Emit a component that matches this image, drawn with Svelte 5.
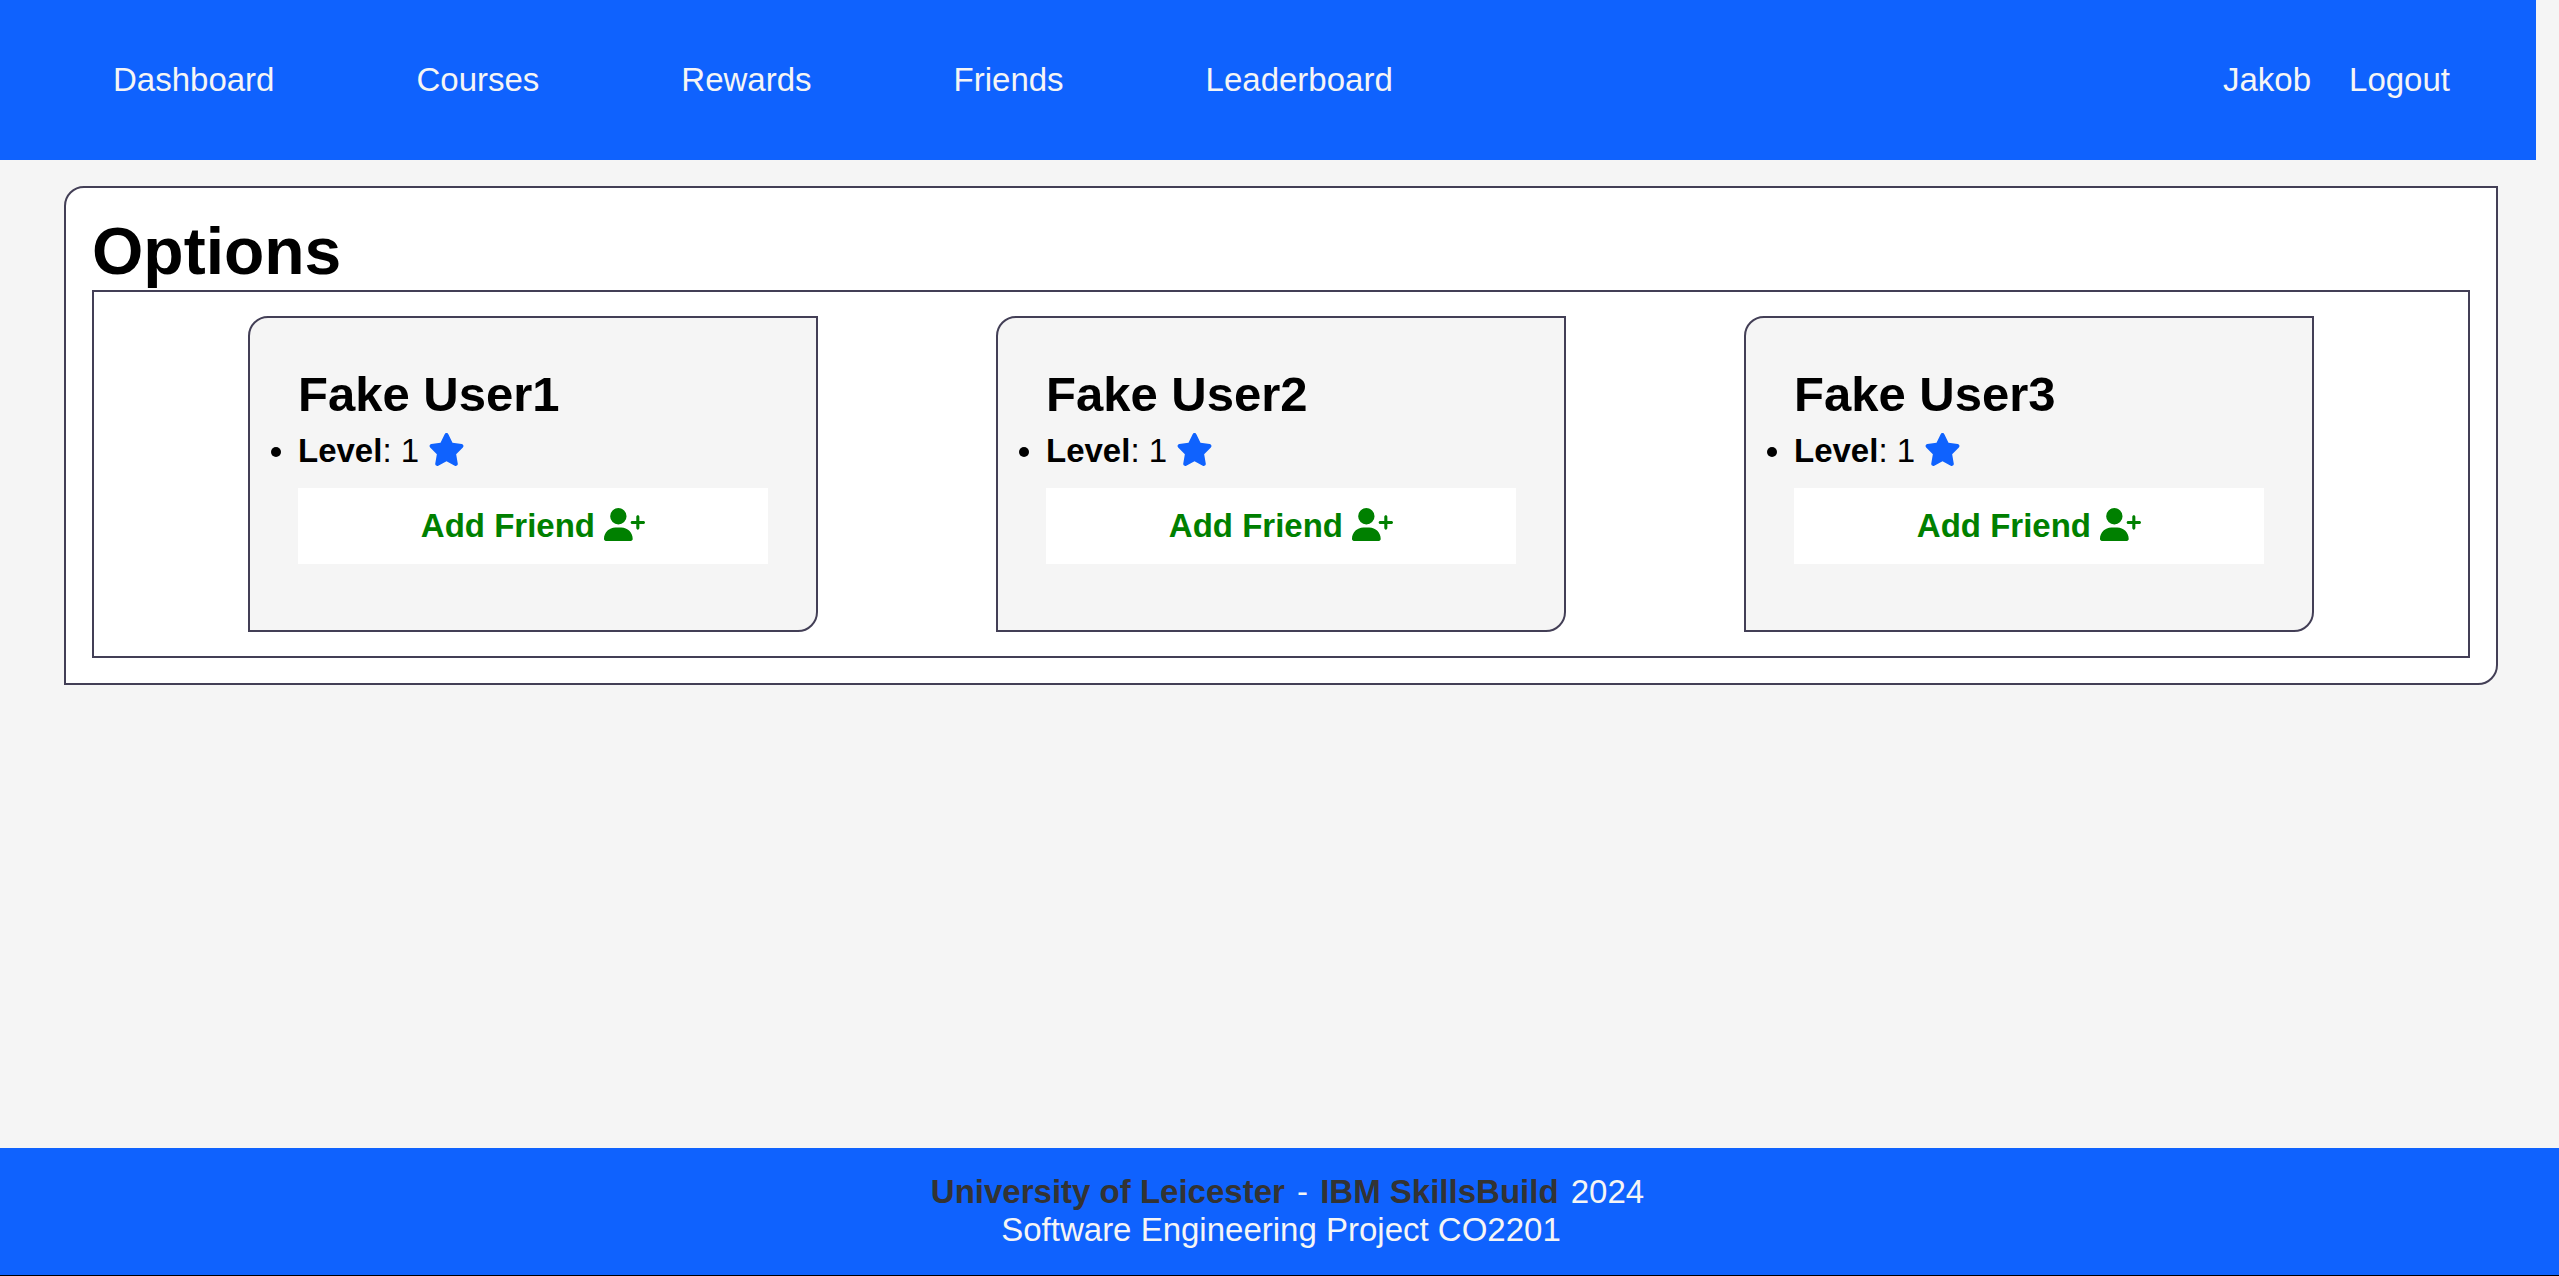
<script>
  const links = ['Dashboard', 'Courses', 'Rewards', 'Friends', 'Leaderboard'];
  const account = ['Jakob', 'Logout'];
  const users = [
    { name: 'Fake User1', level: 1 },
    { name: 'Fake User2', level: 1 },
    { name: 'Fake User3', level: 1 }
  ];
</script>

<div class="page">
  <header>
    <nav class="links" aria-label="Main">
      {#each links as link}
        <a href="#{link.toLowerCase()}">{link}</a>
      {/each}
    </nav>
    <nav class="account" aria-label="Account">
      {#each account as link}
        <a href="#{link.toLowerCase()}">{link}</a>
      {/each}
    </nav>
  </header>

  <main>
    <section class="panel">
      <h1>Options</h1>
      <div class="cards">
        {#each users as user}
          <article class="card">
            <h2>{user.name}</h2>
            <ul>
              <li>
                <b>Level</b>: {user.level}
                <svg class="star" viewBox="0 0 576 512" aria-hidden="true">
                  <path d="M316.9 18C311.6 7 300.4 0 288.1 0s-23.4 7-28.8 18L195 150.3 51.4 171.5c-12 1.8-22 10.2-25.7 21.7s-.7 24.2 7.9 32.7L137.8 329 113.2 474.7c-2 12 3 24.2 12.9 31.3s23 8 33.8 2.3l128.3-68.5 128.3 68.5c10.8 5.7 23.9 4.9 33.8-2.3s14.9-19.3 12.9-31.3L438.5 329 542.7 225.9c8.6-8.5 11.7-21.2 7.9-32.7s-13.7-19.9-25.7-21.7L381.2 150.3 316.9 18z" />
                </svg>
              </li>
            </ul>
            <button type="button">
              Add Friend
              <svg class="plus" viewBox="0 0 640 512" aria-hidden="true">
                <path d="M96 128a128 128 0 1 1 256 0A128 128 0 1 1 96 128zM0 482.3C0 383.8 79.8 304 178.3 304h91.4C368.2 304 448 383.8 448 482.3c0 16.4-13.3 29.7-29.7 29.7H29.7C13.3 512 0 498.7 0 482.3zM504 312V248H440c-13.3 0-24-10.7-24-24s10.7-24 24-24h64V136c0-13.3 10.7-24 24-24s24 10.7 24 24v64h64c13.3 0 24 10.7 24 24s-10.7 24-24 24H552v64c0 13.3-10.7 24-24 24s-24-10.7-24-24z" />
              </svg>
            </button>
          </article>
        {/each}
      </div>
    </section>
  </main>

  <footer>
    <p class="credit">
      <a href="#leicester">University of Leicester</a> - <a href="#skillsbuild">IBM SkillsBuild</a> 2024
    </p>
    <p>Software Engineering Project CO2201</p>
  </footer>
</div>

<style>
  :global(body) {
    margin: 0;
    background: #f5f5f5;
  }

  .page {
    display: flex;
    flex-direction: column;
    min-height: 100vh;
    box-sizing: border-box;
    font-family: 'Liberation Sans', Arial, sans-serif;
    font-size: 33px;
    line-height: 38px;
    color: #000;
  }

  a {
    color: inherit;
    text-decoration: none;
  }

  header {
    display: flex;
    justify-content: space-between;
    margin-right: 23px;
    padding: 61px 86px 61px 113px;
    background: #0f62fe;
    color: #f5f5f5;
  }

  .links {
    display: flex;
    gap: 142px;
  }

  .account {
    display: flex;
    gap: 38px;
  }

  main {
    flex: 1;
    padding: 26px 61px 26px 64px;
  }

  .panel {
    padding: 25px 26px;
    border: 2px solid #433f56;
    border-radius: 20px 0;
    background: #fff;
  }

  h1 {
    margin: 0;
    font-size: 66px;
    line-height: 77px;
  }

  .cards {
    display: flex;
    gap: 178px;
    padding: 24px 154px;
    border: 2px solid #433f56;
  }

  .card {
    flex: 1;
    padding: 48px 48px 66px;
    border: 2px solid #433f56;
    border-radius: 20px 0;
    background: #f5f5f5;
  }

  h2 {
    margin: 0 0 9px;
    font-size: 49px;
    line-height: 57px;
  }

  ul {
    margin: 0 0 18px;
    padding: 0;
  }

  svg {
    height: 33px;
    vertical-align: -4px;
    fill: currentColor;
  }

  .star {
    width: 37px;
    color: #0f62fe;
  }

  .plus {
    width: 41px;
  }

  button {
    display: block;
    width: 100%;
    padding: 19px;
    border: 0;
    background: #fff;
    color: #008000;
    font: inherit;
    font-weight: bold;
    cursor: pointer;
  }

  li {
    height: 38px;
  }

  footer {
    padding: 25px 0 26px 3px;
    border-bottom: 1px solid #000;
    background: #0f62fe;
    color: #f5f5f5;
    text-align: center;
  }

  footer p {
    margin: 0;
  }

  .credit {
    padding-left: 10px;
  }

  .credit a {
    padding: 0 3px;
    color: #333;
    font-weight: bold;
  }
</style>
